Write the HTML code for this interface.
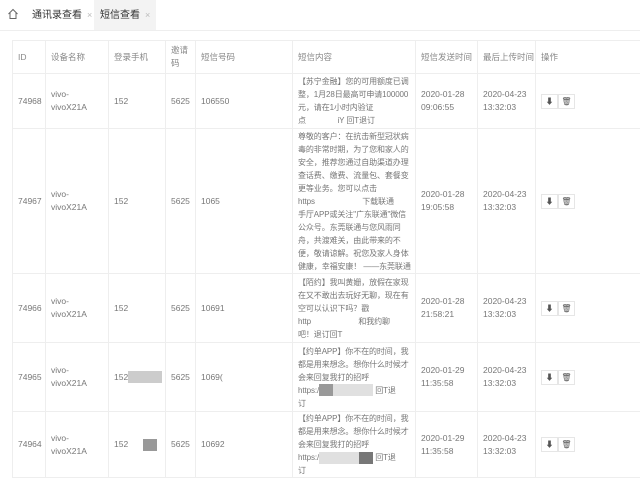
<!DOCTYPE html>
<html><head><meta charset="utf-8"><style>
body{margin:0;width:640px;height:475px;overflow:hidden;background:#fff;font-family:"Liberation Sans","Noto Sans CJK SC",sans-serif;color:#777;font-size:8.5px}
.tabs{position:absolute;left:0;top:0;width:640px;height:30px;background:#fff;border-bottom:1px solid #eee}
.tab{position:absolute;top:0;height:30px;line-height:30px;font-size:10px;color:#333}
.x{color:#bbb;font-size:9px;margin-left:5px}
table{position:absolute;left:12px;top:40px;border-collapse:collapse;table-layout:fixed;width:640px}
td{border:1px solid #eee;padding:0 5px;vertical-align:middle;line-height:13px;overflow:hidden;white-space:nowrap}
td.m{font-size:8px;padding:0 4px 0 5px;letter-spacing:-0.1px}
tr.h td{height:32px;color:#888}
.btn{display:inline-block;width:15px;height:13px;border:1px solid #e6e6e6;text-align:center;line-height:13px;font-size:8px;color:#555;vertical-align:middle}
.blur{display:inline-block;background:#bbb;height:12px;vertical-align:middle}
</style></head><body>
<div class="tabs">
<svg style="position:absolute;left:7px;top:8px" width="12" height="12" viewBox="0 0 12 12"><path d="M1.5 6 L6 1.5 L10.5 6 M3 5 V10.5 H9 V5" fill="none" stroke="#666" stroke-width="1"/></svg>
<div class="tab" style="left:32px">通讯录查看<span class="x">×</span></div>
<div class="tab" style="left:94px;background:#f3f3f3;padding:0 6px;color:#333">短信查看<span class="x">×</span></div>
</div>
<table>
<colgroup><col style="width:33px"><col style="width:63px"><col style="width:57px"><col style="width:30px"><col style="width:97px"><col style="width:123px"><col style="width:62px"><col style="width:58px"><col style="width:117px"></colgroup>
<tr class="h"><td>ID</td><td>设备名称</td><td>登录手机</td><td>邀请<br>码</td><td>短信号码</td><td>短信内容</td><td>短信发送时间</td><td>最后上传时间</td><td>操作</td></tr>
<tr style="height:55px"><td>74968</td><td>vivo-<br>vivoX21A</td><td>152</td><td>5625</td><td>106550</td><td class="m">【苏宁金融】您的可用额度已调<br>整，1月28日最高可申请100000<br>元，请在1小时内验证<br>点　　　　iY 回T退订</td><td>2020-01-28<br>09:06:55</td><td>2020-04-23<br>13:32:03</td><td><span class="btn">⬇</span><span class="btn">🗑</span></td></tr>
<tr style="height:145px"><td>74967</td><td>vivo-<br>vivoX21A</td><td>152</td><td>5625</td><td>1065</td><td class="m">尊敬的客户：在抗击新型冠状病<br>毒的非常时期，为了您和家人的<br>安全，推荐您通过自助渠道办理<br>查话费、缴费、流量包、套餐变<br>更等业务。您可以点击<br>https　　　　　　下载联通<br>手厅APP或关注"广东联通"微信<br>公众号。东莞联通与您风雨同<br>舟，共渡难关，由此带来的不<br>便，敬请谅解。祝您及家人身体<br>健康，幸福安康！ ——东莞联通</td><td>2020-01-28<br>19:05:58</td><td>2020-04-23<br>13:32:03</td><td><span class="btn">⬇</span><span class="btn">🗑</span></td></tr>
<tr style="height:69px"><td>74966</td><td>vivo-<br>vivoX21A</td><td>152</td><td>5625</td><td>10691</td><td class="m">【陌约】我叫黄姗，放假在家现<br>在又不敢出去玩好无聊，现在有<br>空可以认识下吗？戳<br>http　　　　　　和我约聊<br>吧！退订回T</td><td>2020-01-28<br>21:58:21</td><td>2020-04-23<br>13:32:03</td><td><span class="btn">⬇</span><span class="btn">🗑</span></td></tr>
<tr style="height:69px"><td>74965</td><td>vivo-<br>vivoX21A</td><td>152<span class="blur" style="width:34px;background:#ccc"></span></td><td>5625</td><td>1069(</td><td class="m">【约单APP】你不在的时间，我<br>都是用来想念。想你什么时候才<br>会来回复我打的招呼<br>https:/<span class="blur" style="width:14px;background:#999"></span><span class="blur" style="width:40px;background:#e0e0e0"></span> 回T退<br>订</td><td>2020-01-29<br>11:35:58</td><td>2020-04-23<br>13:32:03</td><td><span class="btn">⬇</span><span class="btn">🗑</span></td></tr>
<tr style="height:66px"><td>74964</td><td>vivo-<br>vivoX21A</td><td>152 <span class="blur" style="width:14px;background:#999;margin-left:12px"></span></td><td>5625</td><td>10692</td><td class="m">【约单APP】你不在的时间，我<br>都是用来想念。想你什么时候才<br>会来回复我打的招呼<br>https:/<span class="blur" style="width:40px;background:#e0e0e0"></span><span class="blur" style="width:14px;background:#777"></span> 回T退<br>订</td><td>2020-01-29<br>11:35:58</td><td>2020-04-23<br>13:32:03</td><td><span class="btn">⬇</span><span class="btn">🗑</span></td></tr>
</table>
</body></html>
